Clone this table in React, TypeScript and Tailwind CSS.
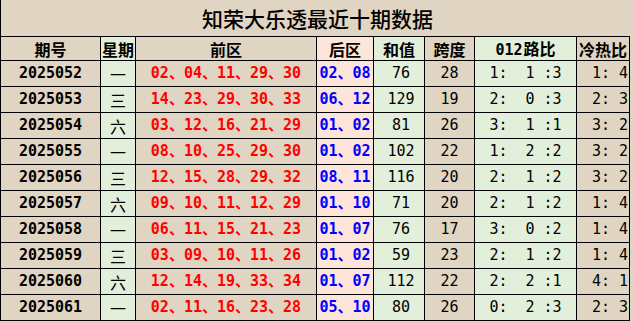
const TAN = "bg-[#e0d5c2]";
const GREEN = "bg-[#e2efda]";
const PINK = "bg-[#fde5d9]";

const rows = [
  ["2025052", "一", "02、04、11、29、30", "02、08", "76", "28", "1:  1 :3", "1: 4"],
  ["2025053", "三", "14、23、29、30、33", "06、12", "129", "19", "2:  0 :3", "2: 3"],
  ["2025054", "六", "03、12、16、21、29", "01、02", "81", "26", "3:  1 :1", "3: 2"],
  ["2025055", "一", "08、10、25、29、30", "01、02", "102", "22", "1:  2 :2", "3: 2"],
  ["2025056", "三", "12、15、28、29、32", "08、11", "116", "20", "2:  1 :2", "3: 2"],
  ["2025057", "六", "09、10、11、12、29", "01、10", "71", "20", "2:  1 :2", "1: 4"],
  ["2025058", "一", "06、11、15、21、23", "01、07", "76", "17", "3:  0 :2", "1: 4"],
  ["2025059", "三", "03、09、10、11、26", "01、02", "59", "23", "2:  1 :2", "1: 4"],
  ["2025060", "六", "12、14、19、33、34", "01、07", "112", "22", "2:  2 :1", "4: 1"],
  ["2025061", "一", "02、11、16、23、28", "05、10", "80", "26", "0:  2 :3", "2: 3"],
];

const cjk = "font-['Noto_Sans_CJK_SC',sans-serif]";
const mono = "font-['DejaVu_Sans_Mono','Noto_Sans_CJK_SC',monospace]";

const headers = [
  { label: "期号", bg: TAN },
  { label: "星期", bg: GREEN },
  { label: "前区", bg: TAN },
  { label: "后区", bg: PINK },
  { label: "和值", bg: GREEN },
  { label: "跨度", bg: TAN },
  { label: "012路比", bg: GREEN },
  { label: "冷热比", bg: TAN },
];

function Cell({ bg, className, children }: { bg: string; className?: string; children: React.ReactNode }) {
  return (
    <div className={`${bg} flex items-center justify-center whitespace-pre leading-none ${className ?? ""}`}>
      {children}
    </div>
  );
}

export default function App() {
  return (
    <div className={`w-[634px] h-[321px] ${TAN} overflow-hidden`}>
      {/* title */}
      <div className="h-[36px] border-l border-black flex items-center justify-center">
        <span className={`${cjk} text-[21px] font-medium text-black pt-[2px]`}>
          知荣大乐透最近十期数据
        </span>
      </div>

      <div className="w-[630px] grid grid-cols-[99px_34px_180px_56px_50px_49px_101px_52px] grid-rows-[23px_repeat(10,25px)] gap-px bg-black border border-black">
        {headers.map((h) => (
          <Cell key={h.label} bg={h.bg} className={`${cjk} text-[16px] font-bold text-black`}>
            {h.label === "012路比" ? (
              <span className="flex items-baseline">
                <span className={`${mono} text-[15px] mr-[1px]`}>012</span>
                <span>路比</span>
              </span>
            ) : (
              h.label
            )}
          </Cell>
        ))}

        {rows.map((r) => (
          <div key={r[0]} className="contents">
            <Cell bg={TAN} className={`${mono} text-[15px] font-bold text-black`}>{r[0]}</Cell>
            <Cell bg={GREEN} className={`${cjk} text-[16px] text-black`}>{r[1]}</Cell>
            <Cell bg={TAN} className={`${mono} text-[15px] font-bold text-[#ff0000]`}>{r[2]}</Cell>
            <Cell bg={PINK} className={`${mono} text-[15px] font-bold text-[#0000ff]`}>{r[3]}</Cell>
            <Cell bg={GREEN} className={`${mono} text-[15px] text-black pl-[4px]`}>{r[4]}</Cell>
            <Cell bg={TAN} className={`${mono} text-[15px] text-black`}>{r[5]}</Cell>
            <Cell bg={GREEN} className={`${mono} text-[15px] text-black`}>{r[6]}</Cell>
            <Cell bg={TAN} className={`${mono} text-[15px] text-black !justify-end pr-[1px]`}>{r[7]}</Cell>
          </div>
        ))}
      </div>
    </div>
  );
}
